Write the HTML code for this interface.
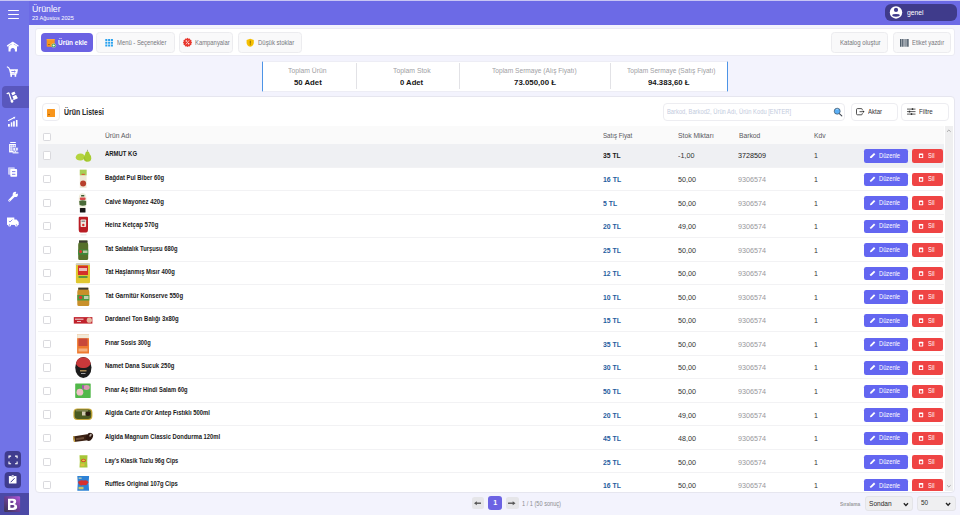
<!DOCTYPE html>
<html><head><meta charset="utf-8">
<style>
*{box-sizing:border-box;margin:0;padding:0}
html,body{width:960px;height:515px;overflow:hidden;background:#f3f3fd;font-family:"Liberation Sans",sans-serif;position:relative}
.a{position:absolute}
.t{position:absolute;white-space:nowrap;transform-origin:0 0}
</style></head><body>
<div class="a" style="left:0px;top:0px;width:960.00px;height:1.00px;background:#c8c6f4"></div>
<div class="a" style="left:0px;top:1px;width:29.00px;height:514.00px;background:#7173e7"></div>
<div class="a" style="left:29px;top:1px;width:931.00px;height:23.50px;background:#6c6ae6"></div>
<div class="a" style="left:0px;top:492.5px;width:29.00px;height:22.50px;background:#4b49a6"></div>
<div class="a" style="left:2px;top:86px;width:27.00px;height:22.00px;background:#5957bd;border-radius:4px 0 0 4px"></div>
<div class="a" style="left:8px;top:10.0px;width:11.30px;height:1.30px;background:#fff;border-radius:0.6px"></div>
<div class="a" style="left:8px;top:13.8px;width:11.30px;height:1.30px;background:#fff;border-radius:0.6px"></div>
<div class="a" style="left:8px;top:17.6px;width:11.30px;height:1.30px;background:#fff;border-radius:0.6px"></div>
<div class="a" style="left:885px;top:3.6px;width:72.40px;height:17.60px;background:#3f3b8b;border-radius:6px"></div>
<div class="a" style="left:35.2px;top:28.4px;width:920.00px;height:28.10px;background:#fff;border:1px solid #ebebf4;border-radius:3px"></div>
<div class="a" style="left:41px;top:32.8px;width:51.50px;height:19.40px;background:#6b62e3;border-radius:4px"></div>
<div class="a" style="left:96.2px;top:32.4px;width:78.80px;height:20.40px;background:#f9f9fa;border:1px solid #ececef;border-radius:3.5px"></div>
<div class="a" style="left:179.2px;top:32.4px;width:54.10px;height:20.40px;background:#f9f9fa;border:1px solid #ececef;border-radius:3.5px"></div>
<div class="a" style="left:237.5px;top:32.4px;width:64.20px;height:20.40px;background:#f9f9fa;border:1px solid #ececef;border-radius:3.5px"></div>
<div class="a" style="left:830.8px;top:32.4px;width:57.50px;height:20.40px;background:#f9f9fa;border:1px solid #ececef;border-radius:3.5px"></div>
<div class="a" style="left:892.8px;top:32.4px;width:58.00px;height:20.40px;background:#f9f9fa;border:1px solid #ececef;border-radius:3.5px"></div>
<div class="a" style="left:262px;top:60.6px;width:465.50px;height:31.30px;background:#fff;border-top:1px solid #ededf5;border-bottom:1px solid #ededf5;border-left:1px solid #4d94e6;border-right:1px solid #4d94e6;border-radius:1px"></div>
<div class="a" style="left:356px;top:63px;width:1.00px;height:25.50px;background:#e2e2e6"></div>
<div class="a" style="left:459px;top:63px;width:1.00px;height:25.50px;background:#e2e2e6"></div>
<div class="a" style="left:610px;top:63px;width:1.00px;height:25.50px;background:#e2e2e6"></div>
<div class="a" style="left:35.2px;top:96.3px;width:920.00px;height:396.70px;background:#fff;border:1px solid #e6e6ef;border-radius:4px"></div>
<div class="a" style="left:42.2px;top:103.3px;width:17.50px;height:18.00px;background:#fff;border:1px solid #ececf1;border-radius:4px"></div>
<div class="a" style="left:46.7px;top:108.7px;width:8.00px;height:8.00px;background:#f8961d;border-radius:0.5px"></div>
<div class="a" style="left:48.3px;top:114.3px;width:2.00px;height:0.70px;background:#b86a10"></div>
<div class="a" style="left:662.5px;top:102.7px;width:182.80px;height:18.60px;background:#fff;border:1px solid #ededf1;border-radius:4px"></div>
<div class="a" style="left:850.5px;top:102.7px;width:47.80px;height:18.60px;background:#fff;border:1px solid #ededf1;border-radius:4px"></div>
<div class="a" style="left:901.3px;top:102.7px;width:48.20px;height:18.60px;background:#fff;border:1px solid #ededf1;border-radius:4px"></div>
<div class="a" style="left:38px;top:126px;width:906.00px;height:18.00px;background:#fafafa"></div>
<div class="a" style="left:945.2px;top:126px;width:7.80px;height:364.50px;background:#efeff0"></div>
<div class="a" style="left:38px;top:126px;width:906px;height:364.5px;overflow:hidden"><div class="a" style="left:5.299999999999997px;top:7px;width:7.50px;height:7.80px;background:#fff;border:1px solid #d9d9dd;border-radius:1.2px"></div>
<div class="a" style="left:0px;top:18.0px;width:906.00px;height:23.50px;background:#eff0f3;border-bottom:1px solid #f2f2f4"></div>
<div class="a" style="left:5.399999999999999px;top:25.400000000000006px;width:7.30px;height:8.20px;background:#fff;border:1px solid #d9d9dd;border-radius:1.2px"></div>
<div class="a" style="left:825.9px;top:23.099999999999994px;width:43.80px;height:13.50px;background:#6366f1;border-radius:2.2px"></div>
<div class="a" style="left:873.9px;top:23.099999999999994px;width:30.70px;height:13.50px;background:#ef4444;border-radius:2.2px"></div>
<div class="a" style="left:0px;top:41.5px;width:906.00px;height:23.50px;background:#fff;border-bottom:1px solid #f2f2f4"></div>
<div class="a" style="left:5.399999999999999px;top:48.95000000000002px;width:7.30px;height:8.20px;background:#fff;border:1px solid #d9d9dd;border-radius:1.2px"></div>
<div class="a" style="left:825.9px;top:46.650000000000006px;width:43.80px;height:13.50px;background:#6366f1;border-radius:2.2px"></div>
<div class="a" style="left:873.9px;top:46.650000000000006px;width:30.70px;height:13.50px;background:#ef4444;border-radius:2.2px"></div>
<div class="a" style="left:0px;top:65.0px;width:906.00px;height:23.50px;background:#fff;border-bottom:1px solid #f2f2f4"></div>
<div class="a" style="left:5.399999999999999px;top:72.5px;width:7.30px;height:8.20px;background:#fff;border:1px solid #d9d9dd;border-radius:1.2px"></div>
<div class="a" style="left:825.9px;top:70.19999999999999px;width:43.80px;height:13.50px;background:#6366f1;border-radius:2.2px"></div>
<div class="a" style="left:873.9px;top:70.19999999999999px;width:30.70px;height:13.50px;background:#ef4444;border-radius:2.2px"></div>
<div class="a" style="left:0px;top:88.5px;width:906.00px;height:23.50px;background:#fff;border-bottom:1px solid #f2f2f4"></div>
<div class="a" style="left:5.399999999999999px;top:96.05000000000001px;width:7.30px;height:8.20px;background:#fff;border:1px solid #d9d9dd;border-radius:1.2px"></div>
<div class="a" style="left:825.9px;top:93.75px;width:43.80px;height:13.50px;background:#6366f1;border-radius:2.2px"></div>
<div class="a" style="left:873.9px;top:93.75px;width:30.70px;height:13.50px;background:#ef4444;border-radius:2.2px"></div>
<div class="a" style="left:0px;top:112.0px;width:906.00px;height:23.50px;background:#fff;border-bottom:1px solid #f2f2f4"></div>
<div class="a" style="left:5.399999999999999px;top:119.6px;width:7.30px;height:8.20px;background:#fff;border:1px solid #d9d9dd;border-radius:1.2px"></div>
<div class="a" style="left:825.9px;top:117.29999999999998px;width:43.80px;height:13.50px;background:#6366f1;border-radius:2.2px"></div>
<div class="a" style="left:873.9px;top:117.29999999999998px;width:30.70px;height:13.50px;background:#ef4444;border-radius:2.2px"></div>
<div class="a" style="left:0px;top:135.5px;width:906.00px;height:23.50px;background:#fff;border-bottom:1px solid #f2f2f4"></div>
<div class="a" style="left:5.399999999999999px;top:143.14999999999998px;width:7.30px;height:8.20px;background:#fff;border:1px solid #d9d9dd;border-radius:1.2px"></div>
<div class="a" style="left:825.9px;top:140.85000000000002px;width:43.80px;height:13.50px;background:#6366f1;border-radius:2.2px"></div>
<div class="a" style="left:873.9px;top:140.85000000000002px;width:30.70px;height:13.50px;background:#ef4444;border-radius:2.2px"></div>
<div class="a" style="left:0px;top:159.0px;width:906.00px;height:23.50px;background:#fff;border-bottom:1px solid #f2f2f4"></div>
<div class="a" style="left:5.399999999999999px;top:166.7px;width:7.30px;height:8.20px;background:#fff;border:1px solid #d9d9dd;border-radius:1.2px"></div>
<div class="a" style="left:825.9px;top:164.40000000000003px;width:43.80px;height:13.50px;background:#6366f1;border-radius:2.2px"></div>
<div class="a" style="left:873.9px;top:164.40000000000003px;width:30.70px;height:13.50px;background:#ef4444;border-radius:2.2px"></div>
<div class="a" style="left:0px;top:182.5px;width:906.00px;height:23.50px;background:#fff;border-bottom:1px solid #f2f2f4"></div>
<div class="a" style="left:5.399999999999999px;top:190.25px;width:7.30px;height:8.20px;background:#fff;border:1px solid #d9d9dd;border-radius:1.2px"></div>
<div class="a" style="left:825.9px;top:187.95000000000005px;width:43.80px;height:13.50px;background:#6366f1;border-radius:2.2px"></div>
<div class="a" style="left:873.9px;top:187.95000000000005px;width:30.70px;height:13.50px;background:#ef4444;border-radius:2.2px"></div>
<div class="a" style="left:0px;top:206.0px;width:906.00px;height:23.50px;background:#fff;border-bottom:1px solid #f2f2f4"></div>
<div class="a" style="left:5.399999999999999px;top:213.79999999999995px;width:7.30px;height:8.20px;background:#fff;border:1px solid #d9d9dd;border-radius:1.2px"></div>
<div class="a" style="left:825.9px;top:211.5px;width:43.80px;height:13.50px;background:#6366f1;border-radius:2.2px"></div>
<div class="a" style="left:873.9px;top:211.5px;width:30.70px;height:13.50px;background:#ef4444;border-radius:2.2px"></div>
<div class="a" style="left:0px;top:229.5px;width:906.00px;height:23.50px;background:#fff;border-bottom:1px solid #f2f2f4"></div>
<div class="a" style="left:5.399999999999999px;top:237.35000000000002px;width:7.30px;height:8.20px;background:#fff;border:1px solid #d9d9dd;border-radius:1.2px"></div>
<div class="a" style="left:825.9px;top:235.05000000000007px;width:43.80px;height:13.50px;background:#6366f1;border-radius:2.2px"></div>
<div class="a" style="left:873.9px;top:235.05000000000007px;width:30.70px;height:13.50px;background:#ef4444;border-radius:2.2px"></div>
<div class="a" style="left:0px;top:253.0px;width:906.00px;height:23.50px;background:#fff;border-bottom:1px solid #f2f2f4"></div>
<div class="a" style="left:5.399999999999999px;top:260.9px;width:7.30px;height:8.20px;background:#fff;border:1px solid #d9d9dd;border-radius:1.2px"></div>
<div class="a" style="left:825.9px;top:258.6px;width:43.80px;height:13.50px;background:#6366f1;border-radius:2.2px"></div>
<div class="a" style="left:873.9px;top:258.6px;width:30.70px;height:13.50px;background:#ef4444;border-radius:2.2px"></div>
<div class="a" style="left:0px;top:276.5px;width:906.00px;height:23.50px;background:#fff;border-bottom:1px solid #f2f2f4"></div>
<div class="a" style="left:5.399999999999999px;top:284.45px;width:7.30px;height:8.20px;background:#fff;border:1px solid #d9d9dd;border-radius:1.2px"></div>
<div class="a" style="left:825.9px;top:282.15000000000003px;width:43.80px;height:13.50px;background:#6366f1;border-radius:2.2px"></div>
<div class="a" style="left:873.9px;top:282.15000000000003px;width:30.70px;height:13.50px;background:#ef4444;border-radius:2.2px"></div>
<div class="a" style="left:0px;top:300.0px;width:906.00px;height:23.50px;background:#fff;border-bottom:1px solid #f2f2f4"></div>
<div class="a" style="left:5.399999999999999px;top:308.0px;width:7.30px;height:8.20px;background:#fff;border:1px solid #d9d9dd;border-radius:1.2px"></div>
<div class="a" style="left:825.9px;top:305.70000000000005px;width:43.80px;height:13.50px;background:#6366f1;border-radius:2.2px"></div>
<div class="a" style="left:873.9px;top:305.70000000000005px;width:30.70px;height:13.50px;background:#ef4444;border-radius:2.2px"></div>
<div class="a" style="left:0px;top:323.5px;width:906.00px;height:23.50px;background:#fff;border-bottom:1px solid #f2f2f4"></div>
<div class="a" style="left:5.399999999999999px;top:331.55px;width:7.30px;height:8.20px;background:#fff;border:1px solid #d9d9dd;border-radius:1.2px"></div>
<div class="a" style="left:825.9px;top:329.25000000000006px;width:43.80px;height:13.50px;background:#6366f1;border-radius:2.2px"></div>
<div class="a" style="left:873.9px;top:329.25000000000006px;width:30.70px;height:13.50px;background:#ef4444;border-radius:2.2px"></div>
<div class="a" style="left:0px;top:347.0px;width:906.00px;height:23.50px;background:#fff;border-bottom:1px solid #f2f2f4"></div>
<div class="a" style="left:5.399999999999999px;top:355.09999999999997px;width:7.30px;height:8.20px;background:#fff;border:1px solid #d9d9dd;border-radius:1.2px"></div>
<div class="a" style="left:825.9px;top:352.8px;width:43.80px;height:13.50px;background:#6366f1;border-radius:2.2px"></div>
<div class="a" style="left:873.9px;top:352.8px;width:30.70px;height:13.50px;background:#ef4444;border-radius:2.2px"></div></div>
<div class="a" style="left:472px;top:496.9px;width:12.10px;height:12.50px;background:#e6e6e9;border-radius:2.5px"></div>
<div class="a" style="left:488px;top:496.3px;width:14.20px;height:13.30px;background:#6c63e3;border-radius:3px"></div>
<div class="a" style="left:506px;top:496.9px;width:12.80px;height:12.50px;background:#e6e6e9;border-radius:2.5px"></div>
<div class="a" style="left:865.4px;top:496.25px;width:47.85px;height:15.00px;background:#efeff1;border:1px solid #e4e4e8;border-radius:3px"></div>
<div class="a" style="left:917.25px;top:495.5px;width:38.35px;height:15.00px;background:#efeff1;border:1px solid #e4e4e8;border-radius:3px"></div>
<svg class="a" style="left:0;top:0" width="960" height="515" viewBox="0 0 960 515"><path d="M75.6 157.4 Q76.4 153.6 80.6 153.5 Q84.5 153.6 84.6 157.1 Q84.4 160.6 80.2 160.5 Q76.2 160.3 75.6 157.4Z" fill="#b4d43e"/><path d="M87.4 151.2 Q85.5 151.4 85.1 154.3 Q83.5 156.4 83.6 158.8 Q84.1 161.8 87.5 161.8 Q91 161.7 91.3 158.5 Q91.4 155.7 89.8 154.2 Q89.3 151.2 87.4 151.2Z" fill="#a8cc32"/><path d="M84 157 Q84.5 160 87 161.3" stroke="#8fb028" stroke-width="0.5" fill="none"/><path d="M87.5 151.3 V149.8" stroke="#6a6a40" stroke-width="0.5"/><rect x="79.8" y="169.7" width="6.8" height="18.2" fill="#efe9d6"/><rect x="79.8" y="169.7" width="6.8" height="5.6" fill="#a8cf55"/><rect x="81.6" y="173.8" width="3.2" height="1.2" fill="#d8603a"/><circle cx="83.1" cy="183.5" r="3" fill="#b8402c"/><path d="M82.6 193 Q78.7 193.2 78.7 199 Q78.7 206 80.2 208.3 H85.2 Q86.6 206 86.6 199 Q86.6 193.2 82.6 193Z" fill="#efeedd"/><path d="M79.2 201 Q82.6 199.6 86.2 201 V205 Q82.6 206.6 79.6 205Z" fill="#4a6a38"/><rect x="79.8" y="197.6" width="5.8" height="2.4" rx="1" fill="#d84848"/><rect x="81" y="195" width="3.4" height="1.6" rx="0.6" fill="#3a5a30"/><rect x="79.9" y="208" width="5.6" height="4.6" rx="0.6" fill="#161616"/><path d="M79.6 216.8 H87.1 Q88 216.8 88 218 V229 Q88 232.6 86 232.6 H80.6 Q78.7 232.6 78.7 229 V218 Q78.7 216.8 79.6 216.8Z" fill="#b91c24"/><rect x="80.6" y="219.5" width="5.5" height="7.5" rx="0.8" fill="#eee8e0"/><circle cx="83.3" cy="225" r="1.2" fill="#d8302a"/><rect x="81.5" y="220.6" width="3.7" height="1.3" fill="#888"/><rect x="80.5" y="234.6" width="6" height="0.6" fill="#ccc"/><path d="M79 240.6 H87.4 V242.6 Q88.2 243.4 88.2 245 V258.5 Q88.2 260.1 86.6 260.1 H79.8 Q78.2 260.1 78.2 258.5 V245 Q78.2 243.4 79 242.6Z" fill="#55702a"/><rect x="79" y="240.6" width="8.4" height="2" fill="#3a3a30"/><rect x="78.2" y="249.6" width="10" height="5" fill="#3a8a3a"/><circle cx="80.6" cy="251.6" r="1.6" fill="#d83a30"/><rect x="83" y="250.5" width="4.5" height="2.5" fill="#b8c8a0"/><rect x="75.9" y="263.4" width="14.1" height="19.9" rx="1.2" fill="#e0c830"/><rect x="75.9" y="263.4" width="14.1" height="1.6" fill="#c8c8c8"/><rect x="78" y="265.5" width="10" height="9.5" fill="#d4302a"/><rect x="79" y="268" width="8" height="3" fill="#f0e0e0" opacity="0.8"/><rect x="78.5" y="276" width="9" height="2" fill="#5a9a40"/><path d="M78.3 287.7 H88.3 V289.6 Q89.3 290.5 89.3 292 V304.6 Q89.3 306.1 87.8 306.1 H78.8 Q77.3 306.1 77.3 304.6 V292 Q77.3 290.5 78.3 289.6Z" fill="#c8902a"/><rect x="78.3" y="287.7" width="10" height="1.9" fill="#3a3a30"/><rect x="77.3" y="295" width="12" height="5.5" fill="#4a9a40"/><circle cx="80.6" cy="297.5" r="1.7" fill="#d83a30"/><rect x="84" y="296" width="4.5" height="3" fill="#c0d0b0"/><rect x="73.8" y="317.1" width="18.6" height="6.5" fill="#c0222c"/><rect x="75" y="318.6" width="8.5" height="1.2" fill="#f0d0d0" opacity="0.9"/><circle cx="89.3" cy="320.2" r="2.6" fill="#e6b8a0"/><rect x="77" y="321" width="4" height="1" fill="#fff" opacity="0.7"/><rect x="77.1" y="334.2" width="11.9" height="19.3" fill="#ee7a30"/><rect x="77.1" y="334.2" width="11.9" height="4" fill="#f2ead8"/><rect x="78.5" y="338.5" width="9" height="7.5" fill="#c8483a"/><rect x="78.5" y="348.5" width="9" height="3" fill="#f8c8a0" opacity="0.7"/><ellipse cx="83.35" cy="367.5" rx="8.1" ry="10.6" fill="#1c1c1c"/><path d="M76 364 Q76.5 357.2 83.35 357.2 Q90.2 357.2 90.7 364 Q88 368.5 83.35 368 Q78.5 368.5 76 364Z" fill="#c8383a"/><rect x="80" y="370" width="6.5" height="1.5" fill="#c8a060" opacity="0.8"/><rect x="81" y="373" width="4.5" height="1" fill="#ddd" opacity="0.7"/><rect x="75.2" y="383.4" width="15.5" height="14.5" rx="0.6" fill="#52b84a"/><circle cx="79.9" cy="392.2" r="3.4" fill="#f0c0c8"/><ellipse cx="86.5" cy="387.5" rx="3.2" ry="2.4" fill="#d898b0"/><rect x="82" y="385" width="2" height="4" fill="#a060a8"/><rect x="73.4" y="408.5" width="19" height="11.6" rx="4" fill="#c8a83a"/><rect x="74.6" y="409.6" width="16.6" height="9.4" rx="3.2" fill="#4a5a22"/><rect x="82" y="411.5" width="3.5" height="4" fill="#d0c8b0"/><ellipse cx="88" cy="413.8" rx="2.4" ry="2.2" fill="#2a1a10"/><rect x="76" y="410.3" width="12" height="1" fill="#c8c090" opacity="0.6"/><path d="M73 436.5 L87 434.2 L88 440.2 L74 442 Z" fill="#3c2214"/><path d="M73 436.5 L74 442 L75.2 441.8 L74.2 436.3Z" fill="#d8b048"/><rect x="76" y="437.6" width="8" height="2" fill="#8a6a50" opacity="0.6" transform="rotate(-8 80 438.6)"/><ellipse cx="89.4" cy="436.8" rx="3.2" ry="4.2" transform="rotate(35 89.4 436.8)" fill="#2e1810"/><ellipse cx="90.5" cy="435.2" rx="1" ry="1.6" transform="rotate(35 90.5 435.2)" fill="#f0e8e0" opacity="0.7"/><path d="M79.5 455.3 H87.5 L87.2 461.5 L87.5 467.5 H79.5 L79.8 461.5Z" fill="#a6c638"/><ellipse cx="83.5" cy="460.4" rx="2.4" ry="1.6" fill="#d83a2a"/><ellipse cx="83.5" cy="460.4" rx="1.5" ry="0.8" fill="#f0d040"/><rect x="80.5" y="463.5" width="4" height="2.8" fill="#e8c040" opacity="0.8"/><path d="M77.3 476.1 H89.1 L88.6 483 L89.1 490.8 H77.3 L77.8 483Z" fill="#2d82d6"/><path d="M78 482 Q80 479.2 83.5 480.6 Q87 479.4 88.6 482.2 Q86.5 486.2 83 485 Q79.5 486.5 78 482Z" fill="#d8302e"/><rect x="78.5" y="486.8" width="5" height="2.5" fill="#e8d050" opacity="0.85"/><rect x="78.6" y="477.5" width="3" height="1.3" fill="#e8e0a0" opacity="0.8"/></svg>
<svg class="a" style="left:0;top:0" width="960" height="515" viewBox="0 0 960 515"><polyline points="7.5,45.9 12.75,42.3 18,45.9" fill="none" stroke="#fff" stroke-width="1.3" stroke-linecap="round" stroke-linejoin="round"/>
<path d="M8.5 46.3 L12.75 43.5 L17 46.3 V51.6 H14.9 V49.4 Q12.75 46.6 10.6 49.4 V51.6 H8.5 Z" fill="#fff"/>
<polyline points="7.3,66.9 8.6,67.6 9.6,69.6" fill="none" stroke="#fff" stroke-width="1.1" stroke-linecap="round"/>
<path d="M9 69.2 H18 L17.2 73.8 H10.1 Z" fill="#fff"/>
<path d="M11.4 71.5 H14.6" stroke="#7173e7" stroke-width="0.9"/><polygon points="14.2,70.2 15.9,71.5 14.2,72.8" fill="#7173e7"/>
<rect x="10.4" y="73.5" width="1.6" height="3.3" fill="#fff"/><rect x="14.6" y="73.5" width="1.6" height="3.3" fill="#fff"/>
<rect x="10.2" y="74.2" width="6.2" height="0.8" fill="#fff"/>
<polyline points="7.1,93.6 8.9,92.9 11.6,101.2" fill="none" stroke="#fff" stroke-width="1.2" stroke-linecap="round" stroke-linejoin="round"/>
<circle cx="12" cy="101.4" r="1.3" fill="#fff"/>
<rect x="11.6" y="92.1" width="3.6" height="2.7" rx="0.5" transform="rotate(-25 13.4 93.45)" fill="#fff"/>
<rect x="12.9" y="95.5" width="4.2" height="3.6" rx="0.5" transform="rotate(-25 15 97.3)" fill="#fff"/>
<line x1="11.8" y1="100.3" x2="17.6" y2="98" stroke="#fff" stroke-width="0.8"/>
<rect x="8" y="124" width="1.8" height="2.6" fill="#fff"/>
<rect x="10.8" y="122.3" width="1.5" height="4.3" fill="#fff"/>
<rect x="13.1" y="121.2" width="1.7" height="5.4" fill="#fff"/>
<rect x="15.9" y="120" width="1.6" height="6.6" fill="#fff"/>
<line x1="8.5" y1="120.5" x2="14" y2="117.8" stroke="#fff" stroke-width="1.1" stroke-linecap="round"/>
<polygon points="13,117 15.4,116.8 14.4,118.9" fill="#fff"/>
<rect x="10.2" y="142" width="5.6" height="1" fill="#fff"/>
<rect x="9.1" y="144" width="6.8" height="8.4" fill="#fff"/>
<rect x="10.3" y="145.3" width="1.2" height="1.1" fill="#7173e7"/>
<rect x="12.2" y="145.3" width="1.2" height="1.1" fill="#7173e7"/>
<rect x="14.1" y="145.3" width="1.2" height="1.1" fill="#7173e7"/>
<rect x="10.3" y="147.4" width="1.2" height="1.1" fill="#7173e7"/>
<rect x="12.2" y="147.4" width="1.2" height="1.1" fill="#7173e7"/>
<rect x="14.1" y="147.4" width="1.2" height="1.1" fill="#7173e7"/>
<rect x="10.3" y="149.5" width="1.2" height="1.1" fill="#7173e7"/>
<rect x="12.2" y="149.5" width="1.2" height="1.1" fill="#7173e7"/>
<rect x="14.1" y="149.5" width="1.2" height="1.1" fill="#7173e7"/>
<path d="M12.9 147.6 H15.5 Q15.6 150.7 14.6 151.1 V152.5 H13.8 V151.1 Q12.8 150.7 12.9 147.6Z" fill="#fff" stroke="#7173e7" stroke-width="0.6"/>
<path d="M15.6 147.6 H18.2 Q18.3 150.7 17.3 151.1 V152.5 H16.5 V151.1 Q15.5 150.7 15.6 147.6Z" fill="#fff" stroke="#7173e7" stroke-width="0.6"/>
<rect x="12.6" y="152.3" width="5.9" height="1.1" fill="#fff"/>
<rect x="8" y="167.2" width="6.8" height="7.5" rx="0.8" fill="#fff" opacity="0.6"/>
<rect x="10.3" y="169.1" width="6.8" height="7.7" rx="0.8" fill="#fff"/>
<path d="M12 171.6 H15.4 M12 174.3 H15.4" stroke="#7173e7" stroke-width="0.9"/>
<line x1="9.4" y1="200.5" x2="14.2" y2="195.6" stroke="#fff" stroke-width="2.3" stroke-linecap="round"/>
<circle cx="15.3" cy="194.4" r="2.6" fill="#fff"/>
<polygon points="15.5,194.2 16.6,191.2 18.6,193.2" fill="#7173e7"/>
<circle cx="9.4" cy="200.5" r="0.45" fill="#7173e7"/>
<rect x="7" y="217.5" width="7.3" height="7.4" fill="#fff"/>
<path d="M14 219.4 H16.6 L18.7 222 V224.9 H14 Z" fill="#fff"/>
<polyline points="8.9,221 10,222 12.4,219.6" fill="none" stroke="#7173e7" stroke-width="0.8"/>
<circle cx="9.6" cy="224.9" r="1.5" fill="#fff"/><circle cx="16.3" cy="224.9" r="1.5" fill="#fff"/>
<circle cx="9.6" cy="224.9" r="0.55" fill="#7173e7"/><circle cx="16.3" cy="224.9" r="0.55" fill="#7173e7"/>
<rect x="4.6" y="451" width="16.4" height="16.8" rx="4" fill="#3f3c8e"/>
<path d="M9 458.2 V456.1 H11.1 M15 456.1 H17.1 V458.2 M17.1 461.6 V463.7 H15 M11.1 463.7 H9 V461.6" fill="none" stroke="#fff" stroke-width="1.1"/>
<rect x="4.6" y="472.1" width="16.4" height="16.1" rx="4" fill="#3f3c8e"/>
<rect x="8.9" y="476" width="7.6" height="7.5" rx="0.5" fill="#fff"/>
<rect x="11.6" y="475.1" width="2.3" height="1.5" rx="0.4" fill="#fff" stroke="#3f3c8e" stroke-width="0.4"/>
<line x1="10.7" y1="482.2" x2="14.6" y2="478.2" stroke="#3f3c8e" stroke-width="1"/>
<defs><linearGradient id="lg" x1="0" y1="1" x2="1" y2="0"><stop offset="0" stop-color="#3a3550"/><stop offset="0.55" stop-color="#6e3f98"/><stop offset="1" stop-color="#b65ad8"/></linearGradient></defs>
<rect x="4.1" y="496.3" width="16" height="15.7" rx="1.2" fill="url(#lg)"/>
<path d="M8 498.7 H12.9 Q16.4 498.7 16.2 501.7 Q16.1 503.5 14.6 504 Q17.3 504.6 17.2 506.9 Q17 509.9 13.4 509.9 H8 Z M10.4 500.8 V502.9 H12.4 Q13.6 502.9 13.6 501.85 Q13.6 500.8 12.4 500.8 Z M10.4 505 V507.7 H12.8 Q14.4 507.7 14.4 506.35 Q14.4 505 12.8 505 Z" fill="#fff" fill-rule="evenodd"/>
<circle cx="896" cy="12.45" r="6.2" fill="#fff"/><circle cx="896" cy="9.9" r="2.1" fill="#3f3b8b"/><ellipse cx="896" cy="15.3" rx="3.8" ry="1.4" fill="#3f3b8b"/>
<rect x="46.7" y="39" width="8" height="7.7" rx="0.6" fill="#f8961d"/><rect x="46.7" y="39" width="8" height="1.2" fill="#fba640"/>
<rect x="48" y="44.1" width="1.9" height="0.8" fill="#9a5a10"/>
<circle cx="53.7" cy="45.5" r="2.1" fill="#2f9d40" stroke="#fff" stroke-width="0.3"/><path d="M53.7 44.3 V46.7 M52.5 45.5 H54.9" stroke="#fff" stroke-width="0.8"/>
<rect x="105.30" y="39.00" width="2.05" height="2.0" fill="#2aa2ee"/>
<rect x="108.10" y="39.00" width="2.05" height="2.0" fill="#2aa2ee"/>
<rect x="110.90" y="39.00" width="2.05" height="2.0" fill="#2aa2ee"/>
<rect x="105.30" y="41.75" width="2.05" height="2.0" fill="#2aa2ee"/>
<rect x="108.10" y="41.75" width="2.05" height="2.0" fill="#2aa2ee"/>
<rect x="110.90" y="41.75" width="2.05" height="2.0" fill="#2aa2ee"/>
<rect x="105.30" y="44.50" width="2.05" height="2.0" fill="#2aa2ee"/>
<rect x="108.10" y="44.50" width="2.05" height="2.0" fill="#2aa2ee"/>
<rect x="110.90" y="44.50" width="2.05" height="2.0" fill="#2aa2ee"/>
<polygon points="192.10,42.40 191.27,43.41 191.48,44.70 190.26,45.16 189.80,46.38 188.51,46.17 187.50,47.00 186.49,46.17 185.20,46.38 184.74,45.16 183.52,44.70 183.73,43.41 182.90,42.40 183.73,41.39 183.52,40.10 184.74,39.64 185.20,38.42 186.49,38.63 187.50,37.80 188.51,38.63 189.80,38.42 190.26,39.64 191.48,40.10 191.27,41.39" fill="#e8372d"/>
<path d="M186 44.3 L189 40.5" stroke="#fff" stroke-width="0.7"/><circle cx="186.3" cy="41" r="0.75" fill="#fff"/><circle cx="188.7" cy="43.8" r="0.75" fill="#fff"/>
<path d="M250.2 38.7 L253.8 40 V42.7 Q253.8 45.6 250.2 46.8 Q246.6 45.6 246.6 42.7 V40 Z" fill="#f5bf00"/>
<rect x="249.8" y="40.7" width="0.85" height="3" fill="#7a5c00"/><rect x="249.8" y="44.3" width="0.85" height="0.85" fill="#7a5c00"/>
<rect x="900.00" y="39" width="0.9" height="7.75" fill="#3d4d5c"/>
<rect x="901.30" y="39" width="0.5" height="7.75" fill="#3d4d5c"/>
<rect x="902.20" y="39" width="1.0" height="7.75" fill="#3d4d5c"/>
<rect x="903.60" y="39" width="0.5" height="7.75" fill="#3d4d5c"/>
<rect x="904.60" y="39" width="0.9" height="7.75" fill="#3d4d5c"/>
<rect x="905.90" y="39" width="0.5" height="7.75" fill="#3d4d5c"/>
<rect x="906.80" y="39" width="1.0" height="7.75" fill="#3d4d5c"/>
<rect x="908.20" y="39" width="0.6" height="7.75" fill="#3d4d5c"/>
<line x1="839.3" y1="113.6" x2="841.8" y2="115.9" stroke="#3d4650" stroke-width="1.1" stroke-linecap="round"/>
<circle cx="837.2" cy="111.2" r="3.0" fill="#5cb0f6" stroke="#3b4a5a" stroke-width="0.65"/><rect x="836" y="109.2" width="2.2" height="0.7" rx="0.3" fill="#a8d8ff"/>
<path d="M862.3 110.3 V109.6 Q862.3 108.6 861.3 108.6 H857.5 Q856.5 108.6 856.5 109.6 V113.8 Q856.5 114.8 857.5 114.8 H861.3 Q862.3 114.8 862.3 113.8 V113.1" fill="none" stroke="#333" stroke-width="0.85"/><path d="M859.5 111.7 H863.2" stroke="#333" stroke-width="0.85"/><polygon points="863,110.6 864.6,111.7 863,112.8" fill="#222"/>
<line x1="907" y1="109.1" x2="915.5" y2="109.1" stroke="#333" stroke-width="0.8"/><rect x="911.8" y="108.19999999999999" width="1.4" height="1.8" fill="#333"/>
<line x1="907" y1="111.6" x2="915.5" y2="111.6" stroke="#333" stroke-width="0.8"/><rect x="908.8" y="110.69999999999999" width="1.4" height="1.8" fill="#333"/>
<line x1="907" y1="114.1" x2="915.5" y2="114.1" stroke="#333" stroke-width="0.8"/><rect x="910.8" y="113.19999999999999" width="1.4" height="1.8" fill="#333"/>
<polyline points="947,131.8 948.85,130 950.7,131.8" fill="none" stroke="#a0a0a0" stroke-width="0.9"/>
<polyline points="947,485.2 948.85,487 950.7,485.2" fill="none" stroke="#a0a0a0" stroke-width="0.9"/>
<path d="M481 503.2 H476" stroke="#555" stroke-width="1.4"/><polygon points="474,503.2 476.8,501.2 476.8,505.2" fill="#555"/>
<path d="M508.1 503.2 H513.4" stroke="#555" stroke-width="1.4"/><polygon points="515.5,503.2 512.7,501.2 512.7,505.2" fill="#555"/>
<polyline points="903.8,503.2 905.9,505.5 908,503.2" fill="none" stroke="#222" stroke-width="1.3"/>
<polyline points="946,503 948.1,505.3 950.2,503" fill="none" stroke="#222" stroke-width="1.3"/>
<clipPath id="cp"><rect x="38" y="126" width="906" height="364.5"/></clipPath><g clip-path="url(#cp)"><path d="M869.9 158.10 L870.3 156.60 L874 152.90 L875.3 154.20 L871.6 157.90 Z" fill="#fff"/><rect x="918.9" y="153.40" width="4.3" height="4.7" rx="0.4" fill="#fff"/><rect x="919.9" y="155.00" width="2.3" height="2.2" fill="#ef4444"/><path d="M869.9 181.65 L870.3 180.15 L874 176.45 L875.3 177.75 L871.6 181.45 Z" fill="#fff"/><rect x="918.9" y="176.95" width="4.3" height="4.7" rx="0.4" fill="#fff"/><rect x="919.9" y="178.55" width="2.3" height="2.2" fill="#ef4444"/><path d="M869.9 205.20 L870.3 203.70 L874 200.00 L875.3 201.30 L871.6 205.00 Z" fill="#fff"/><rect x="918.9" y="200.50" width="4.3" height="4.7" rx="0.4" fill="#fff"/><rect x="919.9" y="202.10" width="2.3" height="2.2" fill="#ef4444"/><path d="M869.9 228.75 L870.3 227.25 L874 223.55 L875.3 224.85 L871.6 228.55 Z" fill="#fff"/><rect x="918.9" y="224.05" width="4.3" height="4.7" rx="0.4" fill="#fff"/><rect x="919.9" y="225.65" width="2.3" height="2.2" fill="#ef4444"/><path d="M869.9 252.30 L870.3 250.80 L874 247.10 L875.3 248.40 L871.6 252.10 Z" fill="#fff"/><rect x="918.9" y="247.60" width="4.3" height="4.7" rx="0.4" fill="#fff"/><rect x="919.9" y="249.20" width="2.3" height="2.2" fill="#ef4444"/><path d="M869.9 275.85 L870.3 274.35 L874 270.65 L875.3 271.95 L871.6 275.65 Z" fill="#fff"/><rect x="918.9" y="271.15" width="4.3" height="4.7" rx="0.4" fill="#fff"/><rect x="919.9" y="272.75" width="2.3" height="2.2" fill="#ef4444"/><path d="M869.9 299.40 L870.3 297.90 L874 294.20 L875.3 295.50 L871.6 299.20 Z" fill="#fff"/><rect x="918.9" y="294.70" width="4.3" height="4.7" rx="0.4" fill="#fff"/><rect x="919.9" y="296.30" width="2.3" height="2.2" fill="#ef4444"/><path d="M869.9 322.95 L870.3 321.45 L874 317.75 L875.3 319.05 L871.6 322.75 Z" fill="#fff"/><rect x="918.9" y="318.25" width="4.3" height="4.7" rx="0.4" fill="#fff"/><rect x="919.9" y="319.85" width="2.3" height="2.2" fill="#ef4444"/><path d="M869.9 346.50 L870.3 345.00 L874 341.30 L875.3 342.60 L871.6 346.30 Z" fill="#fff"/><rect x="918.9" y="341.80" width="4.3" height="4.7" rx="0.4" fill="#fff"/><rect x="919.9" y="343.40" width="2.3" height="2.2" fill="#ef4444"/><path d="M869.9 370.05 L870.3 368.55 L874 364.85 L875.3 366.15 L871.6 369.85 Z" fill="#fff"/><rect x="918.9" y="365.35" width="4.3" height="4.7" rx="0.4" fill="#fff"/><rect x="919.9" y="366.95" width="2.3" height="2.2" fill="#ef4444"/><path d="M869.9 393.60 L870.3 392.10 L874 388.40 L875.3 389.70 L871.6 393.40 Z" fill="#fff"/><rect x="918.9" y="388.90" width="4.3" height="4.7" rx="0.4" fill="#fff"/><rect x="919.9" y="390.50" width="2.3" height="2.2" fill="#ef4444"/><path d="M869.9 417.15 L870.3 415.65 L874 411.95 L875.3 413.25 L871.6 416.95 Z" fill="#fff"/><rect x="918.9" y="412.45" width="4.3" height="4.7" rx="0.4" fill="#fff"/><rect x="919.9" y="414.05" width="2.3" height="2.2" fill="#ef4444"/><path d="M869.9 440.70 L870.3 439.20 L874 435.50 L875.3 436.80 L871.6 440.50 Z" fill="#fff"/><rect x="918.9" y="436.00" width="4.3" height="4.7" rx="0.4" fill="#fff"/><rect x="919.9" y="437.60" width="2.3" height="2.2" fill="#ef4444"/><path d="M869.9 464.25 L870.3 462.75 L874 459.05 L875.3 460.35 L871.6 464.05 Z" fill="#fff"/><rect x="918.9" y="459.55" width="4.3" height="4.7" rx="0.4" fill="#fff"/><rect x="919.9" y="461.15" width="2.3" height="2.2" fill="#ef4444"/><path d="M869.9 487.80 L870.3 486.30 L874 482.60 L875.3 483.90 L871.6 487.60 Z" fill="#fff"/><rect x="918.9" y="483.10" width="4.3" height="4.7" rx="0.4" fill="#fff"/><rect x="919.9" y="484.70" width="2.3" height="2.2" fill="#ef4444"/></g></svg>
<div class="t" style="left:31.99px;top:5.00px;font-size:9.29px;line-height:9.29px;font-weight:normal;color:#fff;transform:scaleX(0.940)">Ürünler</div>
<div class="t" style="left:32.32px;top:16.00px;font-size:5.43px;line-height:5.43px;font-weight:normal;color:#fff;transform:scaleX(1.035)">23 Ağustos 2025</div>
<div class="t" style="left:906.53px;top:9.00px;font-size:7.00px;line-height:7.00px;font-weight:normal;color:#fff;transform:scaleX(0.969)">genel</div>
<div class="t" style="left:57.81px;top:40.00px;font-size:6.29px;line-height:6.29px;font-weight:bold;color:#fff;transform:scaleX(1.025)">Ürün ekle</div>
<div class="t" style="left:117.43px;top:40.00px;font-size:6.86px;line-height:6.86px;font-weight:normal;color:#77777c;transform:scaleX(0.857)">Menü - Seçenekler</div>
<div class="t" style="left:195.13px;top:40.00px;font-size:6.43px;line-height:6.43px;font-weight:normal;color:#77777c;transform:scaleX(0.915)">Kampanyalar</div>
<div class="t" style="left:257.62px;top:40.00px;font-size:6.57px;line-height:6.57px;font-weight:normal;color:#77777c;transform:scaleX(0.910)">Düşük stoklar</div>
<div class="t" style="left:839.51px;top:40.00px;font-size:6.86px;line-height:6.86px;font-weight:normal;color:#77777c;transform:scaleX(0.887)">Katalog oluştur</div>
<div class="t" style="left:911.63px;top:40.00px;font-size:6.86px;line-height:6.86px;font-weight:normal;color:#77777c;transform:scaleX(0.853)">Etiket yazdır</div>
<div class="t" style="left:288.16px;top:67.00px;font-size:7.86px;line-height:7.86px;font-weight:normal;color:#a0a0a4;transform:scaleX(0.864)">Toplam Ürün</div>
<div class="t" style="left:293.77px;top:79.00px;font-size:7.57px;line-height:7.57px;font-weight:bold;color:#151515;transform:scaleX(1.026)">50 Adet</div>
<div class="t" style="left:392.96px;top:67.00px;font-size:7.86px;line-height:7.86px;font-weight:normal;color:#a0a0a4;transform:scaleX(0.869)">Toplam Stok</div>
<div class="t" style="left:399.67px;top:79.00px;font-size:7.43px;line-height:7.43px;font-weight:bold;color:#151515;transform:scaleX(1.033)">0 Adet</div>
<div class="t" style="left:491.97px;top:67.00px;font-size:7.86px;line-height:7.86px;font-weight:normal;color:#a0a0a4;transform:scaleX(0.839)">Toplam Sermaye (Alış Fiyatı)</div>
<div class="t" style="left:513.68px;top:79.00px;font-size:7.43px;line-height:7.43px;font-weight:bold;color:#151515;transform:scaleX(1.061)">73.050,00 Ł</div>
<div class="t" style="left:626.87px;top:67.00px;font-size:7.86px;line-height:7.86px;font-weight:normal;color:#a0a0a4;transform:scaleX(0.837)">Toplam Sermaye (Satış Fiyatı)</div>
<div class="t" style="left:648.07px;top:79.00px;font-size:7.43px;line-height:7.43px;font-weight:bold;color:#151515;transform:scaleX(1.049)">94.383,60 Ł</div>
<div class="t" style="left:64.48px;top:109.00px;font-size:8.14px;line-height:8.14px;font-weight:bold;color:#262626;transform:scaleX(0.850)">Ürün Listesi</div>
<div class="t" style="left:666.64px;top:109.00px;font-size:6.57px;line-height:6.57px;font-weight:normal;color:#c3cbdd;transform:scaleX(0.881)">Barkod, Barkod2, Ürün Adı, Ürün Kodu [ENTER]</div>
<div class="t" style="left:867.50px;top:109.00px;font-size:7.14px;line-height:7.14px;font-weight:normal;color:#333;transform:scaleX(0.844)">Aktar</div>
<div class="t" style="left:918.51px;top:109.00px;font-size:7.14px;line-height:7.14px;font-weight:normal;color:#333;transform:scaleX(0.864)">Filtre</div>
<div class="t" style="left:105.33px;top:133.00px;font-size:7.14px;line-height:7.14px;font-weight:normal;color:#58585c;transform:scaleX(0.940)">Ürün Adı</div>
<div class="t" style="left:603.45px;top:133.00px;font-size:7.14px;line-height:7.14px;font-weight:normal;color:#58585c;transform:scaleX(0.866)">Satış Fiyat</div>
<div class="t" style="left:678.43px;top:133.00px;font-size:7.14px;line-height:7.14px;font-weight:normal;color:#58585c;transform:scaleX(0.951)">Stok Miktarı</div>
<div class="t" style="left:738.66px;top:133.00px;font-size:7.14px;line-height:7.14px;font-weight:normal;color:#58585c;transform:scaleX(0.946)">Barkod</div>
<div class="t" style="left:813.66px;top:133.00px;font-size:7.14px;line-height:7.14px;font-weight:normal;color:#58585c;transform:scaleX(0.946)">Kdv</div>
<div class="t" style="left:104.94px;top:151.00px;font-size:6.71px;line-height:6.71px;font-weight:bold;color:#1a1a1a;transform:scaleX(0.886)">ARMUT KG</div>
<div class="t" style="left:603.32px;top:153.00px;font-size:7.14px;line-height:7.14px;font-weight:bold;color:#1a1a1a;transform:scaleX(0.947)">35 TL</div>
<div class="t" style="left:678.46px;top:152.00px;font-size:7.71px;line-height:7.71px;font-weight:normal;color:#333;transform:scaleX(0.935)">-1,00</div>
<div class="t" style="left:738.45px;top:152.00px;font-size:7.71px;line-height:7.71px;font-weight:normal;color:#222;transform:scaleX(0.936)">3728509</div>
<div class="t" style="left:813.81px;top:152.00px;font-size:7.71px;line-height:7.71px;font-weight:normal;color:#333;transform:scaleX(0.900)">1</div>
<div class="t" style="left:879.44px;top:153.00px;font-size:6.71px;line-height:6.71px;font-weight:normal;color:#fff;transform:scaleX(0.855)">Düzenle</div>
<div class="t" style="left:927.77px;top:153.00px;font-size:6.71px;line-height:6.71px;font-weight:normal;color:#fff;transform:scaleX(0.871)">Sil</div>
<div class="t" style="left:104.94px;top:175.00px;font-size:6.71px;line-height:6.71px;font-weight:bold;color:#1a1a1a;transform:scaleX(0.877)">Bağdat Pul Biber 60g</div>
<div class="t" style="left:603.32px;top:177.00px;font-size:7.14px;line-height:7.14px;font-weight:bold;color:#1f5d9e;transform:scaleX(0.976)">16 TL</div>
<div class="t" style="left:678.46px;top:176.00px;font-size:7.71px;line-height:7.71px;font-weight:normal;color:#333;transform:scaleX(0.935)">50,00</div>
<div class="t" style="left:738.45px;top:176.00px;font-size:7.71px;line-height:7.71px;font-weight:normal;color:#98989c;transform:scaleX(0.933)">9306574</div>
<div class="t" style="left:813.81px;top:176.00px;font-size:7.71px;line-height:7.71px;font-weight:normal;color:#333;transform:scaleX(0.900)">1</div>
<div class="t" style="left:879.44px;top:176.00px;font-size:6.71px;line-height:6.71px;font-weight:normal;color:#fff;transform:scaleX(0.855)">Düzenle</div>
<div class="t" style="left:927.77px;top:176.00px;font-size:6.71px;line-height:6.71px;font-weight:normal;color:#fff;transform:scaleX(0.871)">Sil</div>
<div class="t" style="left:104.94px;top:199.00px;font-size:6.71px;line-height:6.71px;font-weight:bold;color:#1a1a1a;transform:scaleX(0.904)">Calvé Mayonez 420g</div>
<div class="t" style="left:603.32px;top:201.00px;font-size:7.14px;line-height:7.14px;font-weight:bold;color:#1f5d9e;transform:scaleX(0.962)">5 TL</div>
<div class="t" style="left:678.46px;top:200.00px;font-size:7.71px;line-height:7.71px;font-weight:normal;color:#333;transform:scaleX(0.935)">50,00</div>
<div class="t" style="left:738.45px;top:200.00px;font-size:7.71px;line-height:7.71px;font-weight:normal;color:#98989c;transform:scaleX(0.934)">9306574</div>
<div class="t" style="left:813.81px;top:200.00px;font-size:7.71px;line-height:7.71px;font-weight:normal;color:#333;transform:scaleX(0.900)">1</div>
<div class="t" style="left:879.44px;top:200.00px;font-size:6.71px;line-height:6.71px;font-weight:normal;color:#fff;transform:scaleX(0.855)">Düzenle</div>
<div class="t" style="left:927.77px;top:200.00px;font-size:6.71px;line-height:6.71px;font-weight:normal;color:#fff;transform:scaleX(0.871)">Sil</div>
<div class="t" style="left:104.94px;top:222.00px;font-size:6.71px;line-height:6.71px;font-weight:bold;color:#1a1a1a;transform:scaleX(0.901)">Heinz Ketçap 570g</div>
<div class="t" style="left:603.32px;top:224.00px;font-size:7.14px;line-height:7.14px;font-weight:bold;color:#1f5d9e;transform:scaleX(0.962)">20 TL</div>
<div class="t" style="left:678.46px;top:223.00px;font-size:7.71px;line-height:7.71px;font-weight:normal;color:#333;transform:scaleX(0.935)">49,00</div>
<div class="t" style="left:738.45px;top:223.00px;font-size:7.71px;line-height:7.71px;font-weight:normal;color:#98989c;transform:scaleX(0.934)">9306574</div>
<div class="t" style="left:813.81px;top:223.00px;font-size:7.71px;line-height:7.71px;font-weight:normal;color:#333;transform:scaleX(0.900)">1</div>
<div class="t" style="left:879.44px;top:223.00px;font-size:6.71px;line-height:6.71px;font-weight:normal;color:#fff;transform:scaleX(0.855)">Düzenle</div>
<div class="t" style="left:927.77px;top:223.00px;font-size:6.71px;line-height:6.71px;font-weight:normal;color:#fff;transform:scaleX(0.871)">Sil</div>
<div class="t" style="left:104.94px;top:246.00px;font-size:6.71px;line-height:6.71px;font-weight:bold;color:#1a1a1a;transform:scaleX(0.867)">Tat Salatalık Turşusu 680g</div>
<div class="t" style="left:603.32px;top:248.00px;font-size:7.14px;line-height:7.14px;font-weight:bold;color:#1f5d9e;transform:scaleX(0.962)">25 TL</div>
<div class="t" style="left:678.46px;top:247.00px;font-size:7.71px;line-height:7.71px;font-weight:normal;color:#333;transform:scaleX(0.935)">50,00</div>
<div class="t" style="left:738.45px;top:247.00px;font-size:7.71px;line-height:7.71px;font-weight:normal;color:#98989c;transform:scaleX(0.934)">9306574</div>
<div class="t" style="left:813.81px;top:247.00px;font-size:7.71px;line-height:7.71px;font-weight:normal;color:#333;transform:scaleX(0.900)">1</div>
<div class="t" style="left:879.44px;top:247.00px;font-size:6.71px;line-height:6.71px;font-weight:normal;color:#fff;transform:scaleX(0.855)">Düzenle</div>
<div class="t" style="left:927.77px;top:247.00px;font-size:6.71px;line-height:6.71px;font-weight:normal;color:#fff;transform:scaleX(0.871)">Sil</div>
<div class="t" style="left:104.94px;top:269.00px;font-size:6.71px;line-height:6.71px;font-weight:bold;color:#1a1a1a;transform:scaleX(0.877)">Tat Haşlanmış Mısır 400g</div>
<div class="t" style="left:603.32px;top:271.00px;font-size:7.14px;line-height:7.14px;font-weight:bold;color:#1f5d9e;transform:scaleX(0.962)">12 TL</div>
<div class="t" style="left:678.46px;top:270.00px;font-size:7.71px;line-height:7.71px;font-weight:normal;color:#333;transform:scaleX(0.935)">50,00</div>
<div class="t" style="left:738.45px;top:270.00px;font-size:7.71px;line-height:7.71px;font-weight:normal;color:#98989c;transform:scaleX(0.934)">9306574</div>
<div class="t" style="left:813.81px;top:270.00px;font-size:7.71px;line-height:7.71px;font-weight:normal;color:#333;transform:scaleX(0.900)">1</div>
<div class="t" style="left:879.44px;top:271.00px;font-size:6.71px;line-height:6.71px;font-weight:normal;color:#fff;transform:scaleX(0.855)">Düzenle</div>
<div class="t" style="left:927.77px;top:271.00px;font-size:6.71px;line-height:6.71px;font-weight:normal;color:#fff;transform:scaleX(0.871)">Sil</div>
<div class="t" style="left:104.94px;top:293.00px;font-size:6.71px;line-height:6.71px;font-weight:bold;color:#1a1a1a;transform:scaleX(0.893)">Tat Garnitür Konserve 550g</div>
<div class="t" style="left:603.32px;top:295.00px;font-size:7.14px;line-height:7.14px;font-weight:bold;color:#1f5d9e;transform:scaleX(0.962)">10 TL</div>
<div class="t" style="left:678.46px;top:294.00px;font-size:7.71px;line-height:7.71px;font-weight:normal;color:#333;transform:scaleX(0.935)">50,00</div>
<div class="t" style="left:738.45px;top:294.00px;font-size:7.71px;line-height:7.71px;font-weight:normal;color:#98989c;transform:scaleX(0.934)">9306574</div>
<div class="t" style="left:813.81px;top:294.00px;font-size:7.71px;line-height:7.71px;font-weight:normal;color:#333;transform:scaleX(0.900)">1</div>
<div class="t" style="left:879.44px;top:294.00px;font-size:6.71px;line-height:6.71px;font-weight:normal;color:#fff;transform:scaleX(0.855)">Düzenle</div>
<div class="t" style="left:927.77px;top:294.00px;font-size:6.71px;line-height:6.71px;font-weight:normal;color:#fff;transform:scaleX(0.871)">Sil</div>
<div class="t" style="left:104.94px;top:316.00px;font-size:6.71px;line-height:6.71px;font-weight:bold;color:#1a1a1a;transform:scaleX(0.885)">Dardanel Ton Balığı 3x80g</div>
<div class="t" style="left:603.32px;top:318.00px;font-size:7.14px;line-height:7.14px;font-weight:bold;color:#1f5d9e;transform:scaleX(0.962)">15 TL</div>
<div class="t" style="left:678.46px;top:317.00px;font-size:7.71px;line-height:7.71px;font-weight:normal;color:#333;transform:scaleX(0.935)">50,00</div>
<div class="t" style="left:738.45px;top:317.00px;font-size:7.71px;line-height:7.71px;font-weight:normal;color:#98989c;transform:scaleX(0.934)">9306574</div>
<div class="t" style="left:813.81px;top:317.00px;font-size:7.71px;line-height:7.71px;font-weight:normal;color:#333;transform:scaleX(0.900)">1</div>
<div class="t" style="left:879.44px;top:318.00px;font-size:6.71px;line-height:6.71px;font-weight:normal;color:#fff;transform:scaleX(0.855)">Düzenle</div>
<div class="t" style="left:927.77px;top:318.00px;font-size:6.71px;line-height:6.71px;font-weight:normal;color:#fff;transform:scaleX(0.871)">Sil</div>
<div class="t" style="left:104.94px;top:340.00px;font-size:6.71px;line-height:6.71px;font-weight:bold;color:#1a1a1a;transform:scaleX(0.852)">Pınar Sosis 300g</div>
<div class="t" style="left:603.32px;top:342.00px;font-size:7.14px;line-height:7.14px;font-weight:bold;color:#1f5d9e;transform:scaleX(0.962)">35 TL</div>
<div class="t" style="left:678.46px;top:341.00px;font-size:7.71px;line-height:7.71px;font-weight:normal;color:#333;transform:scaleX(0.935)">50,00</div>
<div class="t" style="left:738.45px;top:341.00px;font-size:7.71px;line-height:7.71px;font-weight:normal;color:#98989c;transform:scaleX(0.934)">9306574</div>
<div class="t" style="left:813.81px;top:341.00px;font-size:7.71px;line-height:7.71px;font-weight:normal;color:#333;transform:scaleX(0.900)">1</div>
<div class="t" style="left:879.44px;top:341.00px;font-size:6.71px;line-height:6.71px;font-weight:normal;color:#fff;transform:scaleX(0.855)">Düzenle</div>
<div class="t" style="left:927.77px;top:341.00px;font-size:6.71px;line-height:6.71px;font-weight:normal;color:#fff;transform:scaleX(0.871)">Sil</div>
<div class="t" style="left:104.94px;top:363.00px;font-size:6.71px;line-height:6.71px;font-weight:bold;color:#1a1a1a;transform:scaleX(0.891)">Namet Dana Sucuk 250g</div>
<div class="t" style="left:603.32px;top:365.00px;font-size:7.14px;line-height:7.14px;font-weight:bold;color:#1f5d9e;transform:scaleX(0.962)">30 TL</div>
<div class="t" style="left:678.46px;top:364.00px;font-size:7.71px;line-height:7.71px;font-weight:normal;color:#333;transform:scaleX(0.935)">50,00</div>
<div class="t" style="left:738.45px;top:364.00px;font-size:7.71px;line-height:7.71px;font-weight:normal;color:#98989c;transform:scaleX(0.934)">9306574</div>
<div class="t" style="left:813.81px;top:364.00px;font-size:7.71px;line-height:7.71px;font-weight:normal;color:#333;transform:scaleX(0.900)">1</div>
<div class="t" style="left:879.44px;top:365.00px;font-size:6.71px;line-height:6.71px;font-weight:normal;color:#fff;transform:scaleX(0.855)">Düzenle</div>
<div class="t" style="left:927.77px;top:365.00px;font-size:6.71px;line-height:6.71px;font-weight:normal;color:#fff;transform:scaleX(0.871)">Sil</div>
<div class="t" style="left:104.94px;top:387.00px;font-size:6.71px;line-height:6.71px;font-weight:bold;color:#1a1a1a;transform:scaleX(0.862)">Pınar Aç Bitir Hindi Salam 60g</div>
<div class="t" style="left:603.32px;top:389.00px;font-size:7.14px;line-height:7.14px;font-weight:bold;color:#1f5d9e;transform:scaleX(0.962)">50 TL</div>
<div class="t" style="left:678.46px;top:388.00px;font-size:7.71px;line-height:7.71px;font-weight:normal;color:#333;transform:scaleX(0.935)">50,00</div>
<div class="t" style="left:738.45px;top:388.00px;font-size:7.71px;line-height:7.71px;font-weight:normal;color:#98989c;transform:scaleX(0.934)">9306574</div>
<div class="t" style="left:813.81px;top:388.00px;font-size:7.71px;line-height:7.71px;font-weight:normal;color:#333;transform:scaleX(0.900)">1</div>
<div class="t" style="left:879.44px;top:388.00px;font-size:6.71px;line-height:6.71px;font-weight:normal;color:#fff;transform:scaleX(0.855)">Düzenle</div>
<div class="t" style="left:927.77px;top:388.00px;font-size:6.71px;line-height:6.71px;font-weight:normal;color:#fff;transform:scaleX(0.871)">Sil</div>
<div class="t" style="left:104.94px;top:410.00px;font-size:6.71px;line-height:6.71px;font-weight:bold;color:#1a1a1a;transform:scaleX(0.879)">Algida Carte d'Or Antep Fıstıklı 500ml</div>
<div class="t" style="left:603.32px;top:413.00px;font-size:7.14px;line-height:7.14px;font-weight:bold;color:#1f5d9e;transform:scaleX(0.962)">20 TL</div>
<div class="t" style="left:678.46px;top:412.00px;font-size:7.71px;line-height:7.71px;font-weight:normal;color:#333;transform:scaleX(0.935)">49,00</div>
<div class="t" style="left:738.45px;top:412.00px;font-size:7.71px;line-height:7.71px;font-weight:normal;color:#98989c;transform:scaleX(0.934)">9306574</div>
<div class="t" style="left:813.81px;top:412.00px;font-size:7.71px;line-height:7.71px;font-weight:normal;color:#333;transform:scaleX(0.900)">1</div>
<div class="t" style="left:879.44px;top:412.00px;font-size:6.71px;line-height:6.71px;font-weight:normal;color:#fff;transform:scaleX(0.855)">Düzenle</div>
<div class="t" style="left:927.77px;top:412.00px;font-size:6.71px;line-height:6.71px;font-weight:normal;color:#fff;transform:scaleX(0.871)">Sil</div>
<div class="t" style="left:104.94px;top:434.00px;font-size:6.71px;line-height:6.71px;font-weight:bold;color:#1a1a1a;transform:scaleX(0.876)">Algida Magnum Classic Dondurma 120ml</div>
<div class="t" style="left:603.32px;top:436.00px;font-size:7.14px;line-height:7.14px;font-weight:bold;color:#1f5d9e;transform:scaleX(0.962)">45 TL</div>
<div class="t" style="left:678.46px;top:435.00px;font-size:7.71px;line-height:7.71px;font-weight:normal;color:#333;transform:scaleX(0.935)">48,00</div>
<div class="t" style="left:738.45px;top:435.00px;font-size:7.71px;line-height:7.71px;font-weight:normal;color:#98989c;transform:scaleX(0.934)">9306574</div>
<div class="t" style="left:813.81px;top:435.00px;font-size:7.71px;line-height:7.71px;font-weight:normal;color:#333;transform:scaleX(0.900)">1</div>
<div class="t" style="left:879.44px;top:435.00px;font-size:6.71px;line-height:6.71px;font-weight:normal;color:#fff;transform:scaleX(0.855)">Düzenle</div>
<div class="t" style="left:927.77px;top:435.00px;font-size:6.71px;line-height:6.71px;font-weight:normal;color:#fff;transform:scaleX(0.871)">Sil</div>
<div class="t" style="left:104.94px;top:458.00px;font-size:6.71px;line-height:6.71px;font-weight:bold;color:#1a1a1a;transform:scaleX(0.840)">Lay's Klasik Tuzlu 96g Cips</div>
<div class="t" style="left:603.32px;top:460.00px;font-size:7.14px;line-height:7.14px;font-weight:bold;color:#1f5d9e;transform:scaleX(0.962)">25 TL</div>
<div class="t" style="left:678.46px;top:459.00px;font-size:7.71px;line-height:7.71px;font-weight:normal;color:#333;transform:scaleX(0.935)">50,00</div>
<div class="t" style="left:738.45px;top:459.00px;font-size:7.71px;line-height:7.71px;font-weight:normal;color:#98989c;transform:scaleX(0.934)">9306574</div>
<div class="t" style="left:813.81px;top:459.00px;font-size:7.71px;line-height:7.71px;font-weight:normal;color:#333;transform:scaleX(0.900)">1</div>
<div class="t" style="left:879.44px;top:459.00px;font-size:6.71px;line-height:6.71px;font-weight:normal;color:#fff;transform:scaleX(0.855)">Düzenle</div>
<div class="t" style="left:927.77px;top:459.00px;font-size:6.71px;line-height:6.71px;font-weight:normal;color:#fff;transform:scaleX(0.871)">Sil</div>
<div class="t" style="left:104.94px;top:481.00px;font-size:6.71px;line-height:6.71px;font-weight:bold;color:#1a1a1a;transform:scaleX(0.872)">Ruffles Original 107g Cips</div>
<div class="t" style="left:603.32px;top:483.00px;font-size:7.14px;line-height:7.14px;font-weight:bold;color:#1f5d9e;transform:scaleX(0.962)">16 TL</div>
<div class="t" style="left:678.46px;top:482.00px;font-size:7.71px;line-height:7.71px;font-weight:normal;color:#333;transform:scaleX(0.935)">50,00</div>
<div class="t" style="left:738.45px;top:482.00px;font-size:7.71px;line-height:7.71px;font-weight:normal;color:#98989c;transform:scaleX(0.934)">9306574</div>
<div class="t" style="left:813.81px;top:482.00px;font-size:7.71px;line-height:7.71px;font-weight:normal;color:#333;transform:scaleX(0.900)">1</div>
<div class="t" style="left:879.44px;top:483.00px;font-size:6.71px;line-height:6.71px;font-weight:normal;color:#fff;transform:scaleX(0.855)">Düzenle</div>
<div class="t" style="left:927.77px;top:483.00px;font-size:6.71px;line-height:6.71px;font-weight:normal;color:#fff;transform:scaleX(0.871)">Sil</div>
<div class="t" style="left:493.17px;top:500.00px;font-size:7.14px;line-height:7.14px;font-weight:bold;color:#fff;transform:scaleX(1.000)">1</div>
<div class="t" style="left:522.31px;top:501.00px;font-size:6.29px;line-height:6.29px;font-weight:normal;color:#8c8c90;transform:scaleX(0.893)">1 / 1 (50 sonuç)</div>
<div class="t" style="left:839.65px;top:502.00px;font-size:5.71px;line-height:5.71px;font-weight:bold;color:#9c9ca0;transform:scaleX(0.851)">Sıralama</div>
<div class="t" style="left:869.24px;top:501.00px;font-size:7.14px;line-height:7.14px;font-weight:normal;color:#2a2a2a;transform:scaleX(0.923)">Sondan</div>
<div class="t" style="left:921.34px;top:500.00px;font-size:6.79px;line-height:6.79px;font-weight:normal;color:#2a2a2a;transform:scaleX(0.946)">50</div>
</body></html>
